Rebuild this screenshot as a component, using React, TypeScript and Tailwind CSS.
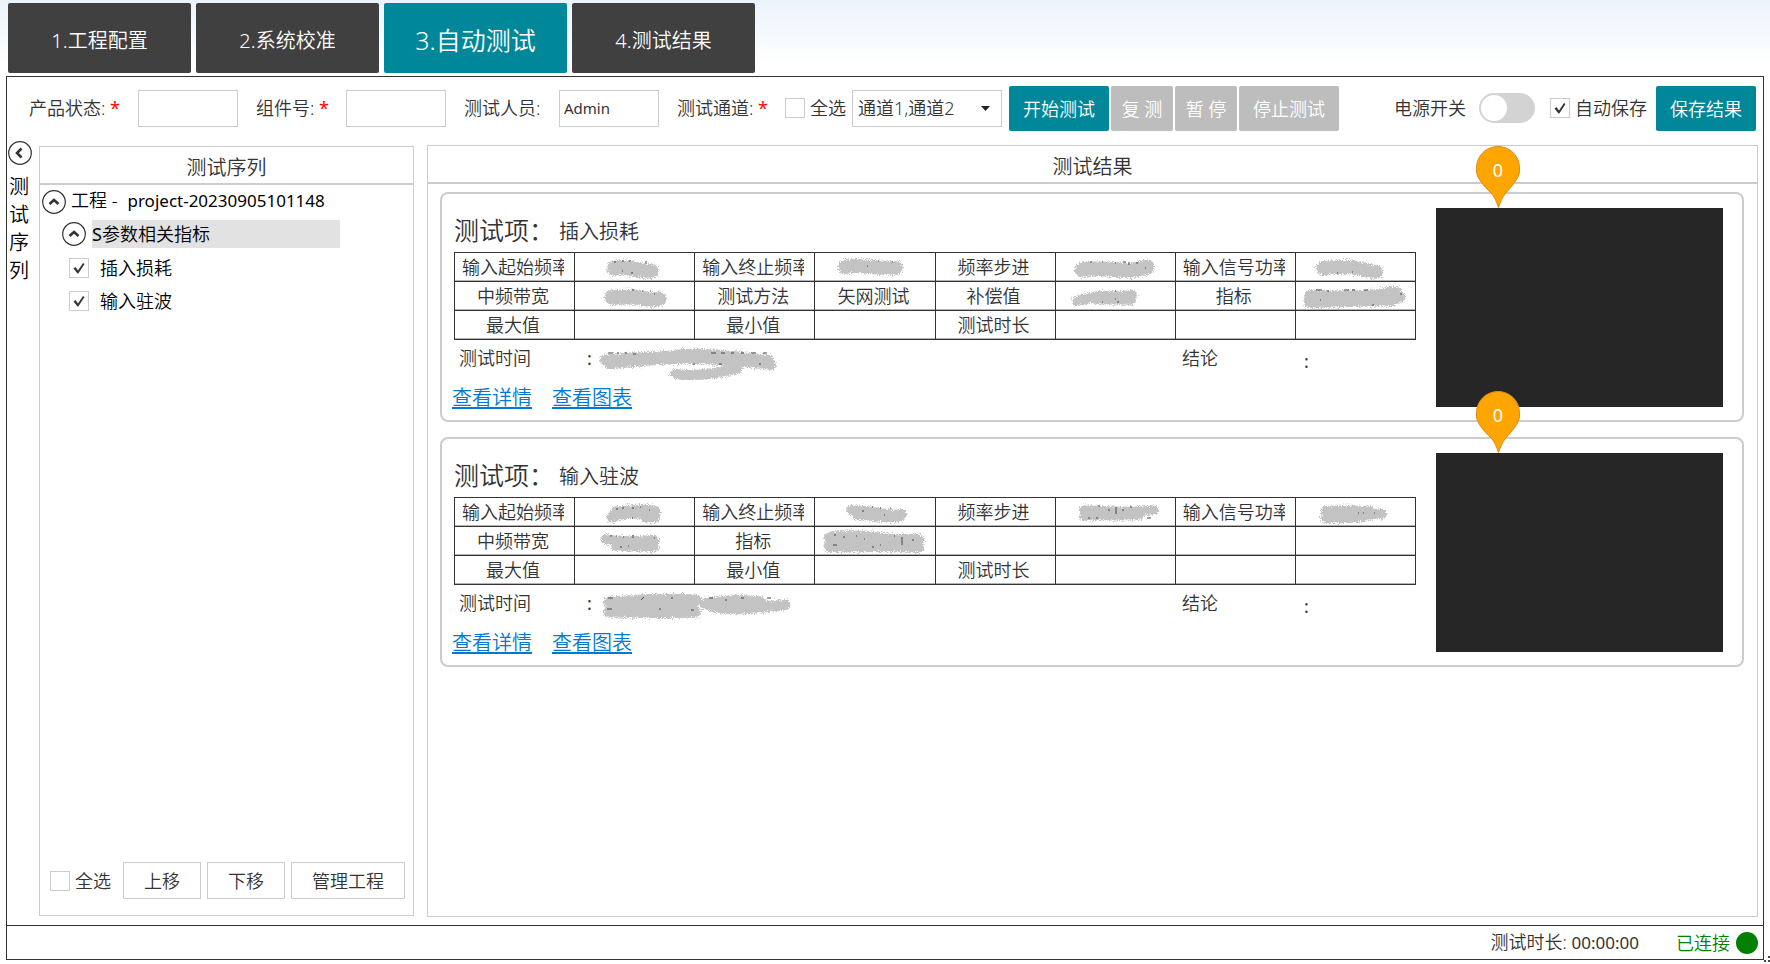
import { useState } from "react";

type Mark = { d: string; w: number; ink?: string };
type Cell = string | Mark | null;
type Result = { name: string; rows: Cell[][]; time: Mark };

const results: Result[] = [
  {
    name: "插入损耗",
    rows: [
      [
        "输入起始频率",
        { d: "M38 15C48 13 54 16 62 17S70 19 75 18", w: 15, ink: "M38 9h2M46 8h2M53 8h2M70 8v3M56 19v2M46 18h1" },
        "输入终止频率",
        { d: "M29 14C36 12 46 13 56 14S74 15 80 15", w: 14, ink: "M51 13h1M62 8h1M76 9h1" },
        "频率步进",
        { d: "M26 17C38 15 52 16 62 17S76 18 91 14", w: 15, ink: "M34 9h2M46 9h1M59 10h1M67 9h3M73 9v3M80 10h2M89 15h1" },
        "输入信号功率",
        { d: "M27 15C42 13 58 14 66 16S78 19 80 19", w: 14, ink: "M41 20h1M56 19h1" },
      ],
      [
        "中频带宽",
        { d: "M36 15C46 16 56 14 66 16S78 18 83 17", w: 15, ink: "M56 8h2M66 9h1M74 9h1M78 12h1" },
        "测试方法",
        "矢网测试",
        "补偿值",
        { d: "M21 19C30 17 38 14 44 14S64 15 76 13M40 17C50 18 64 17 75 18", w: 10, ink: "M46 20h1M59 17h1M62 19v2M59 9h1" },
        "指标",
        { d: "M14 14C34 15 52 14 68 14S88 11 100 10M14 20L96 18M98 14L103 15", w: 12, ink: "M20 8h6M31 9h2M48 8h5M56 8h3M68 8h4M24 18h1M76 23h2M104 12h2" },
      ],
      ["最大值", null, "最小值", null, "测试时长", null, null, null],
    ],
    time: {
      d: "M6 20C30 16 54 18 76 15S126 15 170 20M10 24C36 22 50 20 76 19S132 21 172 25M76 34C92 36 116 34 138 29",
      w: 10,
      ink: "M9 13h5M18 13h2M26 13h2M34 14h3M112 13h5M122 13h4M132 13h3M142 13h3M152 13h5M164 13h4M94 24h2M120 24h3M160 24h2",
    },
  },
  {
    name: "输入驻波",
    rows: [
      [
        "输入起始频率",
        { d: "M36 19C44 15 58 15 66 15S76 15 79 14M40 14C54 12 70 12 79 13M70 19L79 19", w: 11, ink: "M40 11h2M46 10h2M56 10h2M64 9h1M73 12h1M56 20h1" },
        "输入终止频率",
        { d: "M35 12C50 12 54 14 64 15S80 18 86 16M42 17C54 18 70 20 84 19", w: 10, ink: "M46 13h2M56 9h1M64 10h1M68 17h1M74 10h1" },
        "频率步进",
        { d: "M28 12C40 11 48 13 58 13S76 14 98 12M28 18C44 17 60 19 84 17", w: 9, ink: "M42 8h2M52 12h2M60 9v7M66 12h2M74 9h2M32 20h2M40 20h2M91 20h4" },
        "输入信号功率",
        { d: "M30 13C44 12 60 13 74 13M30 20C48 21 62 20 74 17S82 16 86 16", w: 10, ink: "M62 15h1M67 15h1M78 15h1" },
      ],
      [
        "中频带宽",
        { d: "M30 12C38 15 48 14 58 14S70 13 78 13M40 19L78 20", w: 10, ink: "M34 9h2M40 9h1M47 10h1M57 8v3M44 20h2M52 19h1M78 11h1" },
        "指标",
        { d: "M14 11C34 8 50 9 66 12S90 12 102 13M14 19C38 20 68 18 102 20", w: 12, ink: "M18 8h2M27 10h2M17 18h4M40 9h1M48 12h1M56 20h2M64 18h1M78 9h1M86 10v8M96 13h2" },
        null,
        null,
        null,
        null,
      ],
      ["最大值", null, "最小值", null, "测试时长", null, null, null],
    ],
    time: {
      d: "M10 17C38 15 62 13 97 15M10 27C34 27 66 28 96 27M20 22h74M106 19C126 15 148 15 162 17M112 21C140 27 156 22 186 20",
      w: 11,
      ink: "M9 13h5M8 24h5M42 15l3-3M60 24h2M72 13h2M110 13h4M142 13h3M168 13h4M92 25h3M126 15h2",
    },
  },
];

function Scribble({ mark, wide }: { mark: Mark; wide?: boolean }) {
  return (
    <svg
      aria-hidden="true"
      viewBox={wide ? "0 0 200 40" : "0 0 118 28"}
      className={wide ? "h-10 w-[200px] shrink-0" : "mx-auto block h-7 w-[118px]"}
    >
      <g filter="url(#grain)">
        <path d={mark.d} fill="none" stroke="#c3c3c3" strokeWidth={mark.w} strokeLinecap="round" strokeLinejoin="round" />
      </g>
      {mark.ink && <path d={mark.ink} stroke="#444" strokeWidth="1" fill="none" />}
    </svg>
  );
}

function Pin({ value }: { value: number }) {
  return (
    <div className="absolute -top-[62px] left-10 h-[62px] w-11">
      <svg viewBox="0 0 44 62" className="absolute inset-0 h-full w-full" aria-hidden="true">
        <path
          d="M22.5 61.5C20.5 56 18.5 50.5 15.5 47.5C8 40 .5 32 .5 25V22C.5 10 10 .5 22 .5S43.5 10 43.5 22V25C43.5 32 36 40 29 48C26.5 51 24.5 56 22.5 61.5Z"
          fill="#ffa500"
          stroke="#e08a1a"
          strokeWidth="1"
        />
      </svg>
      <span className="relative block pt-3 text-center text-lg leading-6 font-normal text-white">{value}</span>
    </div>
  );
}

function Check({ id, checked, label, className }: { id: string; checked?: boolean; label: string; className: string }) {
  return (
    <label htmlFor={id} className={`flex items-center ${className}`}>
      <span className="relative h-5 w-5 shrink-0">
        <input
          id={id}
          type="checkbox"
          defaultChecked={checked}
          className="peer block h-5 w-5 appearance-none border border-[#ccc] bg-white"
        />
        <svg viewBox="0 0 20 20" className="pointer-events-none absolute inset-0 hidden h-5 w-5 peer-checked:block" aria-hidden="true">
          <path d="M4.500 10.500L6.500 9L9 12.500L14 5L15.500 6L9.300 15.500H8.500Z" fill="#333" />
        </svg>
      </span>
      {label}
    </label>
  );
}

function Chevron({ left }: { left?: boolean }) {
  return (
    <svg viewBox="0 0 24 24" className="block h-6 w-6" aria-hidden="true">
      <circle cx="12" cy="12" r="11.3" fill="#fff" stroke="#333" strokeWidth="1.200" />
      <path d={left ? "M13.5 7.5L9 12L13.5 16.5" : "M7.5 14L12 10L16.5 14"} fill="none" stroke="#333" strokeWidth="2.600" />
    </svg>
  );
}

function Field({ id, label, required, value, className }: { id: string; label: string; required?: boolean; value?: string; className: string }) {
  return (
    <div className={`flex items-center justify-between ${className}`}>
      <label htmlFor={id}>
        {label}:{required && <span className="font-normal text-[#f00]"> *</span>}
      </label>
      <input id={id} type="text" defaultValue={value} className="h-[37px] w-[100px] border border-[#ccc] bg-white px-1 text-[15px] font-normal" />
    </div>
  );
}

function ResultCard({ result }: { result: Result }) {
  return (
    <article className="flex h-[230px] rounded-lg border-2 border-[#ccc] pr-[19px] pl-3">
      <div className="min-w-0 flex-1">
        <h3 className="flex h-[58px] items-end pb-[6px]">
          <span className="w-[105px] text-[25px] leading-8 whitespace-nowrap">测试项：</span>
          <span className="text-xl leading-7">{result.name}</span>
        </h3>
        <table className="w-full table-fixed border-collapse text-center leading-7">
          <tbody>
            {result.rows.map((row, r) => (
              <tr key={r} className="h-[29px]">
                {row.map((cell, c) => (
                  <td key={c} className="h-[29px] border border-[#333] p-0 shadow-[inset_0_-1px_0_#b4b4b4]">
                    {typeof cell === "string" ? (
                      <div className="mr-[10px] ml-[7px] h-7 overflow-hidden whitespace-nowrap">{cell}</div>
                    ) : cell ? (
                      <Scribble mark={cell} />
                    ) : null}
                  </td>
                ))}
              </tr>
            ))}
          </tbody>
        </table>
        <div className="flex h-10 items-start">
          <span className="w-[133px] pt-1 pl-[5px] leading-7">测试时间</span>
          <span className="w-3 pt-1 leading-7 font-normal">:</span>
          <Scribble mark={result.time} wide />
          <span className="ml-auto w-[122px] pt-1 leading-7">结论</span>
          <span className="w-[112px] pt-[7px] leading-7 font-normal">:</span>
        </div>
        <div className="-ml-[2px] flex gap-5 pt-1 text-xl leading-7 text-[#0078d4]">
          <a href="#detail" className="underline underline-offset-2">查看详情</a>
          <a href="#chart" className="underline underline-offset-2">查看图表</a>
        </div>
      </div>
      <div className="relative mt-[14px] ml-5 h-[199px] w-[287px] shrink-0 bg-[#262626]">
        <Pin value={0} />
      </div>
    </article>
  );
}

const tabs = ["1.工程配置", "2.系统校准", "3.自动测试", "4.测试结果"];

export default function App() {
  const [active, setActive] = useState(2);
  return (
    <div className="relative flex min-h-screen flex-col bg-white bg-linear-to-b from-[#ebf3fc] to-white to-[64px] px-[6px] pt-[3px] pb-1 font-['Noto_Sans','Noto_Sans_CJK_SC',sans-serif] text-lg font-[350] text-[#333]">
      <svg className="absolute h-0 w-0" aria-hidden="true">
        <filter id="grain" filterUnits="userSpaceOnUse" x="0" y="0" width="200" height="40">
          <feTurbulence type="fractalNoise" baseFrequency="0.9" numOctaves="1" seed="4" result="noise" />
          <feDisplacementMap in="SourceGraphic" in2="noise" scale="8" xChannelSelector="R" yChannelSelector="G" />
        </filter>
      </svg>

      <nav className="flex gap-[5px] pl-[2px]">
        {tabs.map((tab, i) => (
          <button
            key={tab}
            type="button"
            onClick={() => setActive(i)}
            className={`h-[70px] w-[183px] rounded-xs pt-[5px] text-white ${i === active ? "bg-[#008799] text-[25px]" : "bg-[#404040] text-xl"}`}
          >
            {tab}
          </button>
        ))}
      </nav>

      <main className="mt-[3px] flex flex-1 flex-col border border-[#333] bg-white">
        <div className="flex h-[68px] items-center pr-[7px] pb-[6px] pl-[22px] whitespace-nowrap">
          <Field id="state" label="产品状态" required className="w-[227px] pr-[18px]" />
          <Field id="part" label="组件号" required className="w-[208px] pr-[18px]" />
          <Field id="tester" label="测试人员" value="Admin" className="w-[213px] pr-[18px]" />
          <span className="w-[108px]">
            测试通道:<span className="font-normal text-[#f00]"> *</span>
          </span>
          <Check id="all-channels" label="全选" className="w-[67px] gap-[5px]" />
          <div className="relative">
            <select aria-label="测试通道" className="h-[37px] w-[150px] appearance-none border border-[#ccc] bg-white px-[5px]">
              <option>通道1,通道2</option>
            </select>
            <svg viewBox="0 0 9 5" className="pointer-events-none absolute top-4 right-3 h-[5px] w-[9px]" aria-hidden="true">
              <path d="M0 0H9L4.500 5Z" fill="#222" />
            </svg>
          </div>
          <div className="ml-[7px] flex gap-[2px] text-white">
            <button type="button" className="h-[45px] w-[100px] rounded-xs bg-[#008799] pt-px">开始测试</button>
            <button type="button" className="h-[45px] w-[62px] rounded-xs bg-[#bdbdbd] pt-px">复 测</button>
            <button type="button" className="h-[45px] w-[62px] rounded-xs bg-[#bdbdbd] pt-px">暂 停</button>
            <button type="button" className="h-[45px] w-[100px] rounded-xs bg-[#bdbdbd] pt-px">停止测试</button>
          </div>
          <div className="ml-auto flex items-center">
            <label htmlFor="power" className="mr-[13px]">电源开关</label>
            <span className="relative mr-[15px] h-[30px] w-14">
              <input id="power" type="checkbox" role="switch" className="peer block h-[30px] w-14 appearance-none rounded-full bg-[#d3d3d3]" />
              <span className="pointer-events-none absolute top-[2px] left-[2px] h-[26px] w-[26px] rounded-full bg-white peer-checked:left-7" />
            </span>
            <Check id="autosave" label="自动保存" checked className="mr-[9px] gap-[5px]" />
            <button type="button" className="h-[45px] w-[100px] rounded-xs bg-[#008799] pt-px text-white">保存结果</button>
          </div>
        </div>

        <div className="flex flex-1 pr-[5px] pb-2">
          <aside className="flex w-8 shrink-0 flex-col pl-px text-black">
            <button type="button" aria-label="收起测试序列" className="-mt-1 h-6 w-6">
              <Chevron left />
            </button>
            <span className="mt-2 w-[22px] text-center text-xl leading-7 break-all">测试序列</span>
          </aside>

          <section className="mt-px mb-px flex w-[375px] shrink-0 flex-col border border-[#ccc]">
            <h2 className="h-[38px] border-b-2 border-[#ccc] pt-[5px] text-center text-xl leading-8">测试序列</h2>
            <div className="flex-1 text-black">
              <div className="flex h-8 items-start gap-[5px] pl-[2px]">
                <button type="button" aria-label="折叠工程" className="mt-[5px] h-6 w-6"><Chevron /></button>
                <span className="pt-px leading-7 whitespace-nowrap">
                  工程 -<span className="ml-[10px] text-[17px] font-normal">project-20230905101148</span>
                </span>
              </div>
              <div className="flex h-[34px] items-center gap-[6px] pl-[22px]">
                <button type="button" aria-label="折叠指标" className="h-6 w-6"><Chevron /></button>
                <span className="h-7 w-[248px] bg-[#e2e2e2] leading-7">
                  <span className="font-normal">S</span>参数相关指标
                </span>
              </div>
              <Check id="loss" label="插入损耗" checked className="h-[33px] gap-[11px] pl-[29px]" />
              <Check id="vswr" label="输入驻波" checked className="h-[33px] gap-[11px] pl-[29px]" />
            </div>
            <div className="flex items-center gap-[6px] pb-4 pl-[10px]">
              <Check id="all-items" label="全选" className="mr-[6px] gap-[5px]" />
              <button type="button" className="h-[37px] w-[78px] border border-[#ccc]">上移</button>
              <button type="button" className="h-[37px] w-[78px] border border-[#ccc]">下移</button>
              <button type="button" className="h-[37px] w-[114px] border border-[#ccc]">管理工程</button>
            </div>
          </section>

          <section className="ml-[13px] flex min-w-0 flex-1 flex-col border border-[#ccc]">
            <h2 className="h-[38px] border-b-2 border-[#ccc] pt-[5px] text-center text-xl leading-8">测试结果</h2>
            <div className="flex flex-col gap-[15px] pt-2 pr-[13px] pl-3">
              {results.map((result) => (
                <ResultCard key={result.name} result={result} />
              ))}
            </div>
          </section>
        </div>

        <footer className="flex h-[34px] items-center justify-end border-t border-[#333] pr-[5px]">
          <span className="mr-[37px]">
            测试时长: <span className="text-[17px] font-normal">00:00:00</span>
          </span>
          <span className="mr-[6px] text-[#008000]">已连接</span>
          <span className="h-[22px] w-[22px] rounded-full bg-[#008000]" />
        </footer>
      </main>

      <svg viewBox="0 0 6 8" className="absolute right-0 bottom-0 h-2 w-[6px]" aria-hidden="true">
        <path d="M0 4h2v2H0ZM4 0h2v2H4ZM4 4h2v2H4Z" fill="#444" />
      </svg>
    </div>
  );
}
